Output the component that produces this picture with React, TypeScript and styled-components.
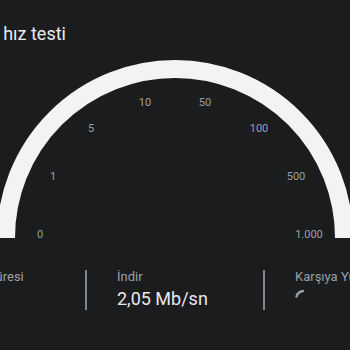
import React from "react";
import styled, { createGlobalStyle } from "styled-components";

const GlobalStyle = createGlobalStyle`
  html, body {
    margin: 0;
    padding: 0;
    background: #1b1c1e;
  }
  body {
    font-family: Roboto, "Liberation Sans", Arial, sans-serif;
    -webkit-font-smoothing: antialiased;
  }
`;

const Viewport = styled.div`
  width: 350px;
  height: 350px;
  overflow: hidden;
  background: #1b1c1e;
`;

const Panel = styled.section`
  width: 532px;
  margin-left: -91px;
  box-sizing: border-box;
  padding: 22px 26px 0;
`;

const Title = styled.h1`
  margin: 0 0 0 2px;
  font-size: 18px;
  line-height: 24px;
  font-weight: 400;
  color: #e8eaed;
`;

const Gauge = styled.svg`
  display: block;
  margin: 12px auto 0;
`;

const GaugeLabel = styled.text`
  font-family: Roboto, "Liberation Sans", Arial, sans-serif;
  font-size: 11px;
  fill: #9aa0a6;
`;

const Stats = styled.div`
  display: grid;
  grid-template-columns: 150px auto 176px auto 1fr;
  margin-top: 29px;
`;

const Stat = styled.div<{ $inset?: boolean }>`
  padding-left: ${(p) => (p.$inset ? "30px" : "0")};
  white-space: nowrap;
`;

const Divider = styled.div`
  width: 2px;
  margin: 1px 0;
  background: #80868b;
`;

const StatLabel = styled.div`
  font-size: 13px;
  line-height: 16px;
  color: #9aa0a6;
`;

const StatValue = styled.div`
  margin-top: 2px;
  height: 24px;
  font-size: 18px;
  line-height: 24px;
  color: #e8eaed;
  display: flex;
  align-items: flex-start;
`;

const ticks: { label: string; x: number; y: number }[] = [
  { label: "0", x: 40, y: 234 },
  { label: "1", x: 53, y: 176 },
  { label: "5", x: 91, y: 128 },
  { label: "10", x: 145, y: 102 },
  { label: "50", x: 205, y: 102 },
  { label: "100", x: 259, y: 128 },
  { label: "500", x: 296, y: 176 },
  { label: "1.000", x: 309, y: 234 },
];

function Spinner() {
  return (
    <svg width="20" height="20" viewBox="0 0 20 20" style={{ marginLeft: -1 }}>
      <path
        d="M2.5 9.5 A8 8 0 0 1 9 4"
        fill="none"
        stroke="#9aa0a6"
        strokeWidth="2.4"
        strokeLinecap="round"
      />
    </svg>
  );
}

export default function App() {
  return (
    <Viewport>
      <GlobalStyle />
      <Panel>
        <Title>İnternet hız testi</Title>
        <Gauge width="360" height="182" viewBox="0 0 360 182">
          <path
            d="M11 180 A169 169 0 0 1 349 180"
            fill="none"
            stroke="#f1f3f4"
            strokeWidth="18"
          />
          {ticks.map((t) => (
            <GaugeLabel
              key={t.label}
              x={t.x + 5}
              y={t.y - 58}
              textAnchor="middle"
              dominantBaseline="central"
            >
              {t.label}
            </GaugeLabel>
          ))}
        </Gauge>
        <Stats>
          <Stat>
            <StatLabel>Gecikme süresi</StatLabel>
            <StatValue>&nbsp;</StatValue>
          </Stat>
          <Divider />
          <Stat $inset>
            <StatLabel>İndir</StatLabel>
            <StatValue>2,05 Mb/sn</StatValue>
          </Stat>
          <Divider />
          <Stat $inset>
            <StatLabel>Karşıya Yükle</StatLabel>
            <StatValue>
              <Spinner />
            </StatValue>
          </Stat>
        </Stats>
      </Panel>
    </Viewport>
  );
}
